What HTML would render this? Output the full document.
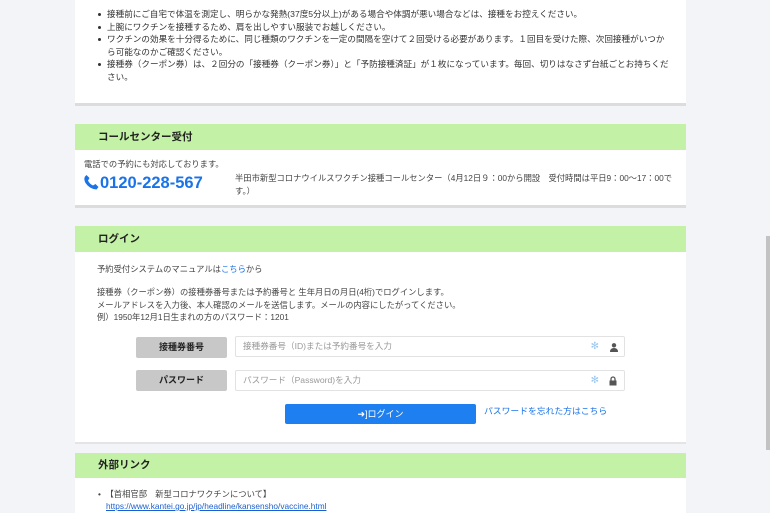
<!DOCTYPE html>
<html><head><meta charset="utf-8"><style>
*{margin:0;padding:0;box-sizing:border-box}
body{width:770px;height:510px;overflow:hidden;background:#f3f4f8;font-family:"Liberation Sans","Noto Sans CJK JP",sans-serif;color:#333;position:relative}
.abs{position:absolute}
.card{position:absolute;left:75px;width:611px;background:#fff;border-bottom:3px solid #dcdcdc}
.hd{position:absolute;left:75px;width:611px;background:#c3f2a6;font-weight:bold;font-size:10.5px;color:#222;padding-left:23px}
ul{list-style:none}
li{position:relative;padding-left:32px;font-size:8.6px;line-height:12.5px;color:#333}
li:before{content:"";position:absolute;left:23px;top:5px;width:3px;height:3px;border-radius:50%;background:#333}
.t{font-size:8.3px;color:#444;white-space:nowrap}
.lbl{position:absolute;left:136px;width:91px;height:21px;background:#c8c8c8;border-radius:2px;font-size:9px;font-weight:bold;text-align:center;line-height:21px;color:#222}
.inp{position:absolute;left:235px;width:390px;height:21px;border:1px solid #e2e2e2;border-radius:2px;font-size:8.6px;color:#999;line-height:19px;padding-left:7px}
.star{position:absolute;right:25px;top:0;color:#9cc8f0;font-size:10px}
</style></head><body>
<div class="card" style="top:0;height:106px">
<ul style="padding-top:8px;padding-right:16px">
<li>接種前にご自宅で体温を測定し、明らかな発熱(37度5分以上)がある場合や体調が悪い場合などは、接種をお控えください。</li>
<li>上腕にワクチンを接種するため、肩を出しやすい服装でお越しください。</li>
<li>ワクチンの効果を十分得るために、同じ種類のワクチンを一定の間隔を空けて２回受ける必要があります。１回目を受けた際、次回接種がいつから可能なのかご確認ください。</li>
<li>接種券（クーポン券）は、２回分の「接種券（クーポン券）」と「予防接種済証」が１枚になっています。毎回、切りはなさず台紙ごとお持ちください。</li>
</ul></div>

<div class="card" style="top:124px;height:84px"></div>
<div class="hd" style="top:124px;height:26px;line-height:26px">コールセンター受付</div>
<div class="abs t" style="left:84px;top:158px">電話での予約にも対応しております。</div>
<div class="abs" style="left:83px;top:174px;font-size:16.5px;font-weight:bold;color:#1a73e8;white-space:nowrap"><svg width="17" height="16" viewBox="0 0 16 16" style="vertical-align:-2px"><path d="M3 1 L6 4 L4.5 6.5 Q6 10 9.5 11.5 L12 10 L15 13 L13 15.5 Q6 15 2 9 Q0 5 1.5 2.5 Z" fill="#1a73e8"/></svg>0120-228-567</div>
<div class="abs t" style="left:235px;top:172px;line-height:13px;white-space:normal;width:445px">半田市新型コロナウイルスワクチン接種コールセンター（4月12日９：00から開設　受付時間は平日9：00〜17：00です。）</div>

<div class="card" style="top:226px;height:218px;border-bottom:2px solid #e4e4e4"></div>
<div class="hd" style="top:226px;height:26px;line-height:26px">ログイン</div>
<div class="abs t" style="left:97px;top:263px">予約受付システムのマニュアルは<span style="color:#1a73e8">こちら</span>から</div>
<div class="abs t" style="left:97px;top:286px;line-height:12.5px">接種券（クーポン券）の接種券番号または予約番号と 生年月日の月日(4桁)でログインします。<br>メールアドレスを入力後、本人確認のメールを送信します。メールの内容にしたがってください。<br>例）1950年12月1日生まれの方のパスワード：1201</div>
<div class="lbl" style="top:337px">接種券番号</div>
<div class="inp" style="top:336px">接種券番号（ID)または予約番号を入力<span class="star">✻</span><svg class="abs" style="right:6px;top:6px" width="8" height="9" viewBox="0 0 8 9"><circle cx="4" cy="2.3" r="2.2" fill="#555"/><path d="M0 9 Q0 5 4 5 Q8 5 8 9Z" fill="#555"/></svg></div>
<div class="lbl" style="top:370px">パスワード</div>
<div class="inp" style="top:370px">パスワード（Password)を入力<span class="star">✻</span><svg class="abs" style="right:7px;top:5px" width="8" height="10" viewBox="0 0 8 10"><path d="M2 4.5V3a2 2 0 014 0v1.5" stroke="#555" stroke-width="1.3" fill="none"/><rect x="0.5" y="4.5" width="7" height="5" fill="#555"/></svg></div>
<div class="abs" style="left:285px;top:404px;width:191px;height:20px;background:#1e7ff0;border-radius:2px;color:#fff;font-size:9px;text-align:center;line-height:20px">➜]ログイン</div>
<div class="abs t" style="left:484px;top:404px;color:#1a73e8;font-size:8.8px">パスワードを忘れた方はこちら</div>

<div class="card" style="top:453px;height:60px;border:none"></div>
<div class="hd" style="top:453px;height:25px;line-height:25px">外部リンク</div>
<div class="abs t" style="left:98px;top:488px">•&nbsp; 【首相官邸　新型コロナワクチンについて】</div>
<div class="abs t" style="left:106px;top:501px;color:#1a5fd0;text-decoration:underline">https://www.kantei.go.jp/jp/headline/kansensho/vaccine.html</div>

<div class="abs" style="left:766px;top:236px;width:4px;height:214px;background:#c2c2c2"></div>
</body></html>
